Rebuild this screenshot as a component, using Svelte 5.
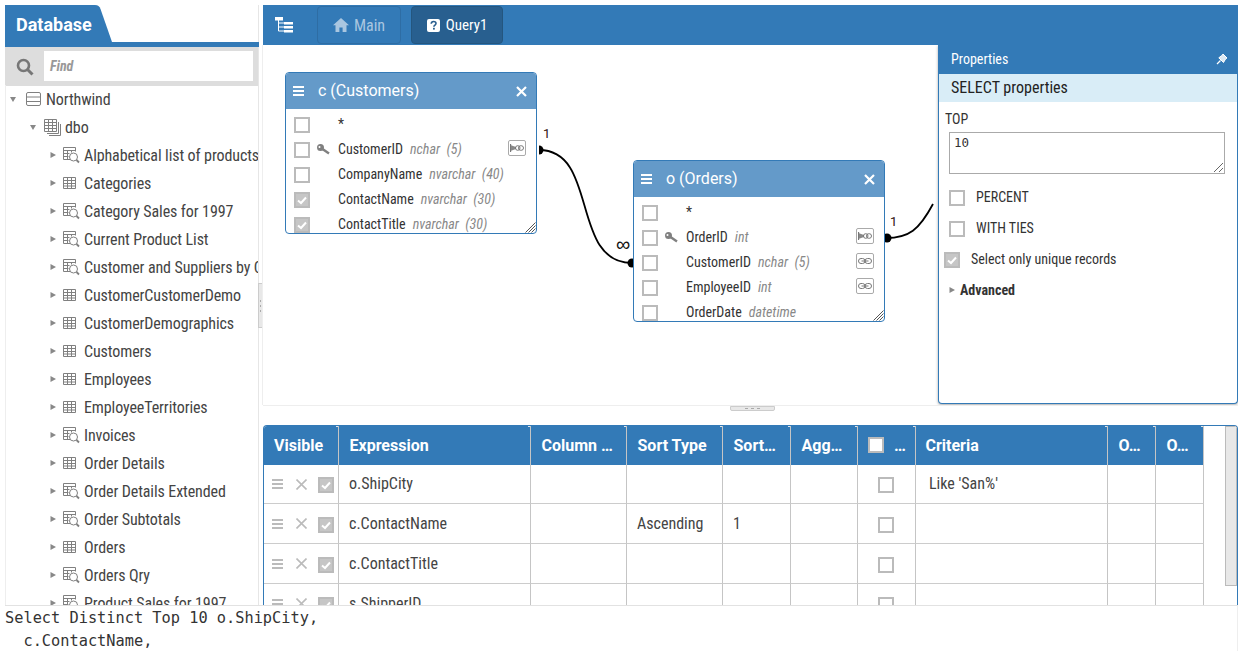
<script>
    const tree = [
        { name: "Alphabetical list of products", view: true },
        { name: "Categories" },
        { name: "Category Sales for 1997", view: true },
        { name: "Current Product List", view: true },
        { name: "Customer and Suppliers by City", view: true },
        { name: "CustomerCustomerDemo" },
        { name: "CustomerDemographics" },
        { name: "Customers" },
        { name: "Employees" },
        { name: "EmployeeTerritories" },
        { name: "Invoices", view: true },
        { name: "Order Details" },
        { name: "Order Details Extended", view: true },
        { name: "Order Subtotals", view: true },
        { name: "Orders" },
        { name: "Orders Qry", view: true },
        { name: "Product Sales for 1997", view: true },
    ];

    const customers = [
        { name: "*" },
        { name: "CustomerID", type: "nchar", size: "(5)", key: true, link: "pk" },
        { name: "CompanyName", type: "nvarchar", size: "(40)" },
        { name: "ContactName", type: "nvarchar", size: "(30)", on: true },
        { name: "ContactTitle", type: "nvarchar", size: "(30)", on: true },
    ];

    const orders = [
        { name: "*" },
        { name: "OrderID", type: "int", key: true, link: "pk" },
        { name: "CustomerID", type: "nchar", size: "(5)", link: "fk" },
        { name: "EmployeeID", type: "int", link: "fk" },
        { name: "OrderDate", type: "datetime" },
    ];

    const entities = [
        { title: "c (Customers)", cls: "customers", rows: customers },
        { title: "o (Orders)", cls: "orders", rows: orders },
    ];

    const columns = [
        { label: "Visible", w: 75 },
        { label: "Expression", w: 192 },
        { label: "Column …", w: 96 },
        { label: "Sort Type", w: 96 },
        { label: "Sort…", w: 68 },
        { label: "Agg…", w: 67 },
        { label: "…", w: 58, check: true },
        { label: "Criteria", w: 192 },
        { label: "O…", w: 48 },
        { label: "O…", w: 48 },
    ];

    const gridRows = [
        { expr: "o.ShipCity", criteria: "Like 'San%'" },
        { expr: "c.ContactName", sort: "Ascending", order: "1" },
        { expr: "c.ContactTitle" },
        { expr: "s.ShipperID" },
    ];

    const template = columns.map((c) => c.w + "px").join(" ");
</script>

{#snippet checkbox(on)}
    <span class="cb" class:on>
        {#if on}
            <svg viewBox="0 0 12 12" width="12" height="12"><path d="M2 6.500 5 9 10 3.500" fill="none" stroke="#fff" stroke-width="2" /></svg>
        {/if}
    </span>
{/snippet}

{#snippet caret(open)}
    <svg class="caret" viewBox="0 0 6 6" width="6" height="6">
        {#if open}
            <path d="M0 1 6 1 3 6z" fill="#888" />
        {:else}
            <path d="M0.500 0 6 3 0.500 6z" fill="#888" />
        {/if}
    </svg>
{/snippet}

{#snippet tableIcon()}
    <svg class="node-icon table-icon" viewBox="0 0 14 14" width="14" height="14" fill="none" stroke="#808080">
        <path d="M.5 1.500h12v11H.5zM.5 4.500h12M.5 7.500h12M.5 10h12M4.500 1.500v11M8.500 1.500v11" />
    </svg>
{/snippet}

{#snippet viewIcon()}
    <svg class="node-icon view-icon" viewBox="0 0 17 17" width="17" height="17" fill="none" stroke="#808080">
        <path d="M7 12.500H.5V.5h12v4M.5 3.500h12M.5 6.500h6M.5 9.500h5M4.500 3.500v9M8.500 3.500v2" />
        <circle cx="10.500" cy="10" r="4" />
        <path d="M13.500 13 16 15.500" stroke-width="1.800" />
    </svg>
{/snippet}

{#snippet linkIcon(kind)}
    <span class="link-btn">
        <svg viewBox="0 0 14 8" width="14" height="8" fill="none" stroke="#777" stroke-width="1">
            {#if kind === "pk"}
                <path d="M.5 0v8" stroke-width="1.300" />
                <path d="M1 1.200 6 3v2L1 6.800z" fill="#888" stroke="none" />
                <rect x="5.500" y="1.700" width="4.500" height="4.600" rx="2.300" />
                <rect x="8.500" y="1.700" width="5" height="4.600" rx="2.300" />
            {:else}
                <rect x=".5" y="1.500" width="6.500" height="5" rx="2.500" />
                <rect x="7" y="1.500" width="6.500" height="5" rx="2.500" />
                <path d="M3.500 4h7" />
            {/if}
        </svg>
    </span>
{/snippet}

<div class="app">
    <div class="workspace">
        <aside class="sidebar">
            <div class="side-tab">
                <span class="tab-title">Database</span>
                <svg class="tab-slope" viewBox="0 0 18 37" width="18" height="37"><path d="M0 0H1C4 0 5.500 1.500 6.500 4L18 37H0z" fill="#337ab7" /></svg>
            </div>
            <div class="side-rule"></div>
            <div class="search">
                <svg viewBox="0 0 18 18" width="18" height="18" fill="none" stroke="#777">
                    <circle cx="7.500" cy="7.500" r="5.500" stroke-width="2.600" />
                    <path d="M11.500 11.500 16.500 16.500" stroke-width="3" />
                </svg>
                <div class="find">Find</div>
            </div>
            <div class="tree">
                <div class="node level0">
                    {@render caret(true)}
                    <svg class="node-icon db" viewBox="0 0 15 14" width="15" height="14" fill="none" stroke="#808080">
                        <rect x=".5" y=".5" width="14" height="13" rx="1.500" />
                        <path d="M.5 5h14M.5 9.500h14" />
                    </svg>
                    <span>Northwind</span>
                </div>
                <div class="node level1">
                    {@render caret(true)}
                    <svg class="node-icon schema" viewBox="0 0 17 17" width="17" height="17" fill="none" stroke="#808080">
                        <path d="M.5.500h12v12H.5zM.5 3.500h12M.5 6.500h12M.5 9.500h12M4.500.5v12M8.500.5v12M14.500 3v11.500H3M16.500 5v11.500H5" />
                    </svg>
                    <span>dbo</span>
                </div>
                {#each tree as item}
                    <div class="node level2">
                        {@render caret(false)}
                        {#if item.view}
                            {@render viewIcon()}
                        {:else}
                            {@render tableIcon()}
                        {/if}
                        <span>{item.name}</span>
                    </div>
                {/each}
            </div>
            <div class="v-handle"><i></i><i></i><i></i></div>
        </aside>

        <main class="main">
            <div class="toolbar">
                <svg class="tree-btn" viewBox="0 0 18 16" width="18" height="16" fill="#fff">
                    <path d="M0 0h8v3.500H0zM9 5h9v2.600H9zM9 9h9v2.600H9zM9 13h9v2.600H9z" />
                    <path d="M3.500 3v11M3.500 6h6M3.500 10h6M3.500 14h6" fill="none" stroke="#fff" />
                </svg>
                <div class="tab">
                    <svg viewBox="0 0 16 14" width="16" height="14"><path d="M8 0 16 7.200H13.500V14H9.600V9.500H6.400V14H2.500V7.200H0z" fill="#a9c6e0" /></svg>
                    <span>Main</span>
                </div>
                <div class="tab active">
                    <svg viewBox="0 0 13 13" width="13" height="13">
                        <rect width="13" height="13" rx="2" fill="#fff" />
                        <path d="M4.200 4.800C4.300 3.300 5.300 2.500 6.600 2.500S9 3.300 9 4.500C9 6 6.900 6.100 6.900 7.700" fill="none" stroke="#2a5f8f" stroke-width="1.600" />
                        <rect x="6" y="8.800" width="1.800" height="1.800" fill="#2a5f8f" />
                    </svg>
                    <span>Query1</span>
                </div>
            </div>

            <div class="canvas">
                <svg class="links" width="975" height="360" fill="none" stroke="#000" stroke-width="1.800">
                    <path d="M275 105C335 105 306 218 368 218" />
                    <path d="M622 193C645 193 655 185 669 159" />
                    <path d="M275 100.500a4.500 4.500 0 0 1 0 9z" fill="#000" stroke="none" />
                    <circle cx="368" cy="218" r="4.500" fill="#000" stroke="none" />
                    <circle cx="623" cy="193" r="4.500" fill="#000" stroke="none" />
                </svg>
                <span class="rel one-a">1</span>
                <span class="rel many">∞</span>
                <span class="rel one-b">1</span>

                {#each entities as entity}
                    <div class="entity {entity.cls}">
                        <div class="entity-head">
                            <svg viewBox="0 0 11 10" width="11" height="10" fill="#fff"><path d="M0 0h11v2H0zM0 4h11v2H0zM0 8h11v2H0z" /></svg>
                            <span class="entity-title">{entity.title}</span>
                            <svg class="entity-close" viewBox="0 0 11 11" width="11" height="11"><path d="M1 1 10 10M10 1 1 10" stroke="#fff" stroke-width="2.200" /></svg>
                        </div>
                        <div class="entity-body">
                            {#each entity.rows as row}
                                <div class="field">
                                    {@render checkbox(row.on)}
                                    <span class="key-slot">
                                        {#if row.key}
                                            <svg viewBox="0 0 13 11" width="13" height="11"><path d="M3.500 0a3.500 3.500 0 1 1 0 7 3.500 3.500 0 0 1 0-7zM2.500 2a1 1 0 1 0 0 2 1 1 0 0 0 0-2z" fill="#808080" fill-rule="evenodd" /><path d="M5.500 5 12 9.500" stroke="#808080" stroke-width="2.400" /></svg>
                                        {/if}
                                    </span>
                                    <span class="field-name">{row.name}</span>
                                    {#if row.type}
                                        <span class="field-type">{row.type}{#if row.size}&nbsp; {row.size}{/if}</span>
                                    {/if}
                                    {#if row.link}
                                        {@render linkIcon(row.link)}
                                    {/if}
                                </div>
                            {/each}
                        </div>
                        <svg class="grip" viewBox="0 0 11 11" width="11" height="11" stroke="#555"><path d="M.5 10.500 10.500.5M3.500 10.500 10.500 3.500M6.500 10.500 10.500 6.500" /></svg>
                    </div>
                {/each}

                <div class="props">
                    <div class="props-head">
                        <span>Properties</span>
                        <svg viewBox="0 0 12 12" width="12" height="12">
                            <path d="M7 1 11 5 9.500 6 7.500 9.500 2.800 4.800 6 2.500z" fill="#dbe8f3" stroke="#fff" />
                            <path d="M4.500 7.500 1 11" stroke="#fff" stroke-width="1.200" />
                        </svg>
                    </div>
                    <div class="props-sub">SELECT properties</div>
                    <div class="props-body">
                        <div class="top-label">TOP</div>
                        <div class="top-input">
                            10
                            <svg viewBox="0 0 9 9" width="9" height="9" stroke="#666"><path d="M0 9 9 0M5 9 9 5" /></svg>
                        </div>
                        <div class="opt">{@render checkbox(false)}<span>PERCENT</span></div>
                        <div class="opt">{@render checkbox(false)}<span>WITH TIES</span></div>
                        <div class="opt unique">{@render checkbox(true)}<span>Select only unique records</span></div>
                        <div class="advanced">{@render caret(false)}<span>Advanced</span></div>
                    </div>
                </div>
            </div>

            <div class="h-split"><span class="h-handle"><i></i><i></i><i></i></span></div>

            <div class="grid-wrap">
                <div class="grid">
                    <div class="grid-row head" style="grid-template-columns: {template}">
                        {#each columns as col}
                            <div class="th">
                                {#if col.check}
                                    <span class="th-check"></span>
                                {/if}
                                {col.label}
                            </div>
                        {/each}
                    </div>
                    {#each gridRows as row}
                        <div class="grid-row" style="grid-template-columns: {template}">
                            <div class="td actions">
                                <svg viewBox="0 0 11 10" width="11" height="10" fill="#bbb"><path d="M0 0h11v2H0zM0 4h11v2H0zM0 8h11v2H0z" /></svg>
                                <svg class="remove" viewBox="0 0 11 11" width="11" height="11"><path d="M.5 .5 10.500 10.500M10.500 .5 .5 10.500" stroke="#bbb" stroke-width="1.600" /></svg>
                                {@render checkbox(true)}
                            </div>
                            <div class="td">{row.expr}</div>
                            <div class="td"></div>
                            <div class="td">{row.sort ?? ""}</div>
                            <div class="td">{row.order ?? ""}</div>
                            <div class="td"></div>
                            <div class="td center">{@render checkbox(false)}</div>
                            <div class="td crit">{row.criteria ?? ""}</div>
                            <div class="td"></div>
                            <div class="td"></div>
                        </div>
                    {/each}
                </div>
                <div class="scrollbar"></div>
            </div>
        </main>
    </div>

    <div class="sql">Select Distinct Top 10 o.ShipCity,
  c.ContactName,</div>
</div>

<style>
    :global(body) {
        background: #fff;
        overflow: hidden;
    }

    .app {
        width: 1242px;
        height: 651px;
        overflow: hidden;
        box-sizing: border-box;
        padding: 5px 4px 0 5px;
        display: flex;
        flex-direction: column;
        font-family: Roboto, "Liberation Sans", sans-serif;
        font-stretch: condensed;
        font-size: 16px;
        color: #333;
    }

    .workspace {
        height: 600px;
        display: flex;
        flex: none;
    }

    .sidebar {
        width: 254px;
        flex: none;
        position: relative;
        display: flex;
        flex-direction: column;
        border-right: 1px solid #e6e6e6;
        box-sizing: border-box;
    }

    .side-tab {
        height: 37px;
        display: flex;
    }

    .tab-title {
        background: #337ab7;
        color: #fff;
        font-size: 18px;
        font-weight: 700;
        font-stretch: normal;
        padding: 0 0 0 11px;
        width: 78px;
        line-height: 40px;
    }

    .side-rule {
        height: 5px;
        background: #337ab7;
        margin-right: -1px;
    }

    .search {
        height: 39px;
        background: #ddd;
        display: flex;
        align-items: center;
        gap: 10px;
        padding: 0 5px 0 11px;
        flex: none;
    }

    .find {
        flex: 1;
        height: 30px;
        margin-top: -1px;
        background: #fff;
        color: #999;
        font-weight: 700;
        font-style: italic;
        font-size: 14px;
        line-height: 31px;
        padding-left: 6px;
    }

    .tree {
        flex: 1;
        overflow: hidden;
        white-space: nowrap;
        margin-top: -1px;
        border-left: 1px solid #eee;
    }

    .node {
        height: 28px;
        flex: none;
        display: flex;
        align-items: center;
        color: #444;
        letter-spacing: -0.1px;
    }

    .level0 {
        padding-left: 4px;
    }

    .level1 {
        padding-left: 24px;
    }

    .level2 {
        padding-left: 44px;
    }

    .caret {
        flex: none;
        margin-right: 7px;
    }

    .node-icon {
        flex: none;
    }

    .level0 .caret {
        margin-right: 10px;
    }

    .level1 .caret {
        margin-right: 8px;
    }

    .table-icon {
        margin-right: 7px;
    }

    .view-icon {
        margin-right: 4px;
    }

    .db {
        margin-right: 5px;
    }

    .schema {
        margin-right: 4px;
    }

    .v-handle {
        position: absolute;
        left: 253px;
        top: 278px;
        width: 5px;
        height: 45px;
        background: #e8e8e8;
        border: 1px solid #ccc;
        box-sizing: border-box;
        display: flex;
        flex-direction: column;
        align-items: center;
        justify-content: center;
        gap: 3px;
    }

    .v-handle i {
        width: 1px;
        height: 2px;
        background: #aaa;
    }

    .main {
        width: 975px;
        margin-left: 4px;
        flex: none;
        display: flex;
        flex-direction: column;
    }

    .toolbar {
        height: 40px;
        flex: none;
        background: #337ab7;
        display: flex;
        align-items: center;
        padding-left: 12px;
    }

    .tree-btn {
        margin-right: 24px;
    }

    .tab {
        height: 38px;
        box-sizing: border-box;
        width: 84px;
        border: 1px solid #2e6da4;
        border-radius: 4px;
        margin-right: 10px;
        display: flex;
        align-items: center;
        justify-content: center;
        gap: 5px;
        color: #a9c6e0;
    }

    .tab.active {
        width: 92px;
        background: #285f8f;
        border-color: #24567f;
        color: #fff;
        font-size: 15px;
        gap: 6px;
    }

    .canvas {
        height: 360px;
        flex: none;
        position: relative;
        overflow: hidden;
        border-left: 1px solid #eee;
        margin-left: -1px;
    }

    .links {
        position: absolute;
        left: 1px;
        top: 0;
    }

    .rel {
        position: absolute;
        color: #301010;
        font-family: Roboto, sans-serif;
        font-stretch: normal;
        font-size: 13px;
        line-height: 16px;
    }

    .one-a {
        left: 280px;
        top: 81px;
    }

    .many {
        left: 353px;
        top: 191px;
        font-family: "Liberation Sans", sans-serif;
        font-size: 20px;
        color: #111;
    }

    .one-b {
        left: 627px;
        top: 169px;
    }

    .entity {
        position: absolute;
        width: 252px;
        height: 162px;
        box-sizing: border-box;
        border: 1px solid #337ab7;
        border-radius: 4px;
        background: #fff;
        overflow: hidden;
    }

    .customers {
        left: 22px;
        top: 27px;
    }

    .orders {
        left: 370px;
        top: 115px;
    }

    .entity-head {
        height: 36px;
        background: #649ac9;
        display: flex;
        align-items: center;
        padding: 0 9px 0 7px;
        color: #fff;
    }

    .entity-title {
        flex: 1;
        margin-left: 14px;
        padding-bottom: 2px;
        font-size: 16px;
        font-stretch: normal;
    }

    .entity-body {
        padding: 3px 0 0 8px;
    }

    .field {
        height: 25px;
        display: flex;
        align-items: center;
        font-size: 14px;
        position: relative;
        white-space: nowrap;
    }

    .key-slot {
        width: 28px;
        flex: none;
        display: flex;
        padding-left: 7px;
        box-sizing: border-box;
    }

    .field-name {
        margin-right: 7px;
        padding-bottom: 2px;
    }

    .field-type {
        color: #888;
        font-style: italic;
        padding-bottom: 2px;
    }

    .link-btn {
        position: absolute;
        right: 10px;
        top: 3px;
        width: 18px;
        height: 16px;
        box-sizing: border-box;
        border: 1px solid #aaa;
        border-radius: 2px;
        display: flex;
        align-items: center;
        justify-content: center;
    }

    .grip {
        position: absolute;
        right: 0;
        bottom: 0;
    }

    .cb {
        width: 16px;
        height: 16px;
        box-sizing: border-box;
        border: 2px solid #bbb;
        background: #fff;
        display: inline-flex;
        align-items: center;
        justify-content: center;
        flex: none;
    }

    .cb.on {
        background: #c6c6c6;
    }

    .props {
        position: absolute;
        left: 675px;
        top: 0;
        width: 300px;
        height: 359px;
        box-sizing: border-box;
        background: #fff;
        border: 1px solid #337ab7;
        border-top: 0;
        border-radius: 0 0 4px 4px;
        box-shadow: 0 1px 3px rgba(0, 0, 0, 0.35);
    }

    .props-head {
        height: 29px;
        box-sizing: border-box;
        padding: 0 9px 2px 12px;
        background: #337ab7;
        color: #fff;
        font-size: 14px;
        display: flex;
        align-items: center;
        justify-content: space-between;
    }

    .props-sub {
        height: 28px;
        background: #d9edf7;
        color: #222;
        font-size: 16px;
        line-height: 27px;
        padding-left: 12px;
    }

    .props-body {
        padding: 9px 0 0 6px;
        font-size: 14px;
    }

    .top-label {
        line-height: 16px;
    }

    .top-input {
        position: relative;
        margin: 5px 0 0 4px;
        width: 276px;
        height: 42px;
        box-sizing: border-box;
        border: 1px solid #aaa;
        padding: 2px 4px;
        font-family: "DejaVu Sans Mono", monospace;
        font-size: 12.500px;
        line-height: 16px;
        font-stretch: normal;
    }

    .top-input svg {
        position: absolute;
        right: 1px;
        bottom: 1px;
    }

    .opt {
        height: 31px;
        display: flex;
        align-items: center;
        gap: 11px;
        padding-left: 4px;
    }

    .top-input + .opt {
        margin-top: 8px;
    }

    .opt span:last-child {
        padding-bottom: 2px;
    }

    .opt.unique {
        padding-left: 0;
        margin-left: -1px;
    }

    .advanced {
        height: 31px;
        box-sizing: border-box;
        padding: 0 0 2px 4px;
        display: flex;
        align-items: center;
        font-weight: 700;
    }

    .advanced .caret {
        margin-right: 5px;
    }

    .h-split {
        height: 20px;
        flex: none;
        border-top: 1px solid #eee;
        box-sizing: border-box;
        display: flex;
        justify-content: center;
    }

    .h-handle {
        width: 45px;
        height: 5px;
        margin-left: 3px;
        background: #e8e8e8;
        border: 1px solid #ccc;
        box-sizing: border-box;
        border-radius: 0 0 2px 2px;
        display: flex;
        align-items: center;
        justify-content: center;
        gap: 3px;
    }

    .h-handle i {
        width: 3px;
        height: 1px;
        background: #aaa;
    }

    .grid-wrap {
        height: 180px;
        flex: none;
        position: relative;
        overflow: hidden;
        border-left: 1px solid #337ab7;
        border-right: 1px solid #337ab7;
        border-top: 1px solid #337ab7;
        border-top-left-radius: 4px;
        border-top-right-radius: 4px;
        box-sizing: border-box;
    }

    .grid {
        width: 940px;
        margin-top: -1px;
    }

    .grid-row {
        display: grid;
        height: 40px;
    }

    .grid-row:nth-child(2) {
        height: 39px;
    }

    .grid-row:nth-child(2) .td:not(.actions):not(.center) {
        padding-bottom: 2px;
    }

    .grid-row.head {
        background: #337ab7;
        color: #fff;
        font-weight: 700;
        font-stretch: normal;
    }

    .th {
        position: relative;
        display: flex;
        align-items: center;
        padding-left: 10.500px;
        border-right: 1px solid #c5c5c5;
        white-space: nowrap;
        overflow: hidden;
    }

    .th:first-child {
        padding-left: 10px;
    }

    .th:nth-child(7) {
        padding-left: 10px;
    }

    .th:nth-child(8) {
        padding-left: 9.500px;
    }

    .th::after {
        content: "";
        position: absolute;
        right: -1px;
        top: 1px;
        width: 3px;
        height: 1px;
        background: #dfe6ec;
    }

    .th-check {
        width: 16px;
        height: 16px;
        box-sizing: border-box;
        background: #fff;
        border: 2px solid #bbb;
        margin-right: 10px;
    }

    .td {
        display: flex;
        align-items: center;
        padding-left: 10px;
        border-right: 1px solid #c5c5c5;
        border-bottom: 1px solid #ccc;
        box-sizing: border-box;
        color: #444;
    }

    .td .cb {
        margin-top: 2px;
    }

    .td.actions {
        padding-left: 8px;
    }

    .remove {
        margin: 0 11px 0 13px;
    }

    .td.center {
        padding-left: 20px;
    }

    .td.crit {
        padding-left: 13px;
    }

    .scrollbar {
        position: absolute;
        right: 0;
        top: 0;
        width: 12px;
        height: 160px;
        background: #e8e8e8;
        border: 1px solid #bbb;
        box-sizing: border-box;
    }

    .sql {
        height: 46px;
        padding-top: 1px;
        border-top: 1px solid #e2e2e2;
        white-space: pre;
        font-family: "DejaVu Sans Mono", monospace;
        font-stretch: normal;
        font-size: 15.300px;
        line-height: 23px;
        color: #333;
        border-right: 1px solid #eee;
        box-sizing: border-box;
    }
</style>
